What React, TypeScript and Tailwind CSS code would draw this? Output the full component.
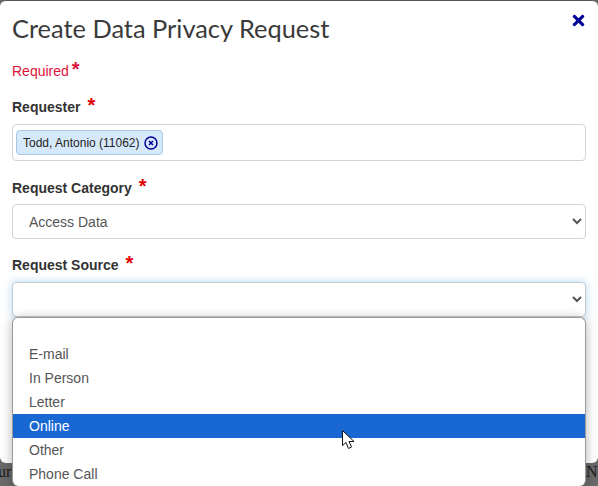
import { FaTimes } from "react-icons/fa";

const sourceOptions = ["", "E-mail", "In Person", "Letter", "Online", "Other", "Phone Call"];

function Star() {
  return <span className="ml-[7px] text-[20px] font-bold leading-none text-[#e00000] relative top-[-2px]">*</span>;
}

function FieldLabel({ children }: { children: string }) {
  return (
    <div className="flex items-center h-[20px] text-[14px] font-bold text-[#333]">
      {children}
      <Star />
    </div>
  );
}

export default function App() {
  return (
    <div className="relative h-[486px] w-[598px] overflow-hidden bg-[#6a6a6a] font-['Liberation_Sans',sans-serif]">
      <div className="h-[463px] rounded-[6px] border-t border-t-[#555] bg-white px-[12px]">
        <div className="flex items-start justify-between h-[55px]">
          <h1 className="pt-[12px] font-['Lato',sans-serif] text-[25.4px] leading-[30px] text-[#3a3a3a]">
            Create Data Privacy Request
          </h1>
          <button className="mt-[11px] -mr-[1px] text-[#000099]">
            <FaTimes size={17} />
          </button>
        </div>

        <div className="mt-[5px] flex h-[20px] items-center text-[14px] text-[#dc143c]">
          Required
          <span className="ml-[3px] text-[20px] font-bold leading-none relative top-[-2px]">*</span>
        </div>

        <div className="mt-[16px]">
          <FieldLabel>Requester</FieldLabel>
          <div className="mt-[7px] flex h-[37px] w-[574px] items-center rounded-[4px] border border-[#ced4da] px-[3px]">
            <span className="flex h-[25px] items-center gap-[4px] rounded-[4px] border border-[#a9c6e3] bg-[#d6e9fb] pl-[6px] pr-[4px] text-[12px] text-[#222]">
              Todd, Antonio (11062)
              <svg width="14" height="14" viewBox="0 0 14 14" fill="none" stroke="#000099">
                <circle cx="7" cy="7" r="6" strokeWidth="1.5" />
                <path d="M5 5l4 4M9 5l-4 4" strokeWidth="1.6" />
              </svg>
            </span>
          </div>
        </div>

        <div className="mt-[17px]">
          <FieldLabel>Request Category</FieldLabel>
          <select
            defaultValue="Access Data"
            className="mt-[6px] block h-[35px] w-[574px] rounded-[4px] border border-[#ced4da] bg-white pl-[12px] text-[14px] text-[#555]"
          >
            <option>Access Data</option>
          </select>
        </div>

        <div className="mt-[16px]">
          <FieldLabel>Request Source</FieldLabel>
          <select className="mt-[7px] block h-[35px] w-[574px] rounded-[4px] border border-[#c4ccd4] bg-white pl-[12px] text-[14px] text-[#555] shadow-[0_0_8px_rgba(102,175,233,0.5)]">
            <option></option>
          </select>
        </div>
      </div>

      <div className="flex h-[18px] items-center justify-between font-['Liberation_Serif',serif] text-[16px] font-normal text-[#1c1c1c]">
        <span className="-ml-[2px]">ur</span>
        <span className="w-[12px] whitespace-nowrap">No</span>
      </div>

      {/* open select list */}
      <div className="absolute left-[12px] top-[317px] h-[169px] w-[574px] overflow-hidden rounded-[6px] border-l border-r border-t border-[#9a9a9a] bg-white text-[14px] text-[#555] shadow-[0_2px_12px_rgba(0,0,0,0.3)]">
        {sourceOptions.map((option) => (
          <div
            key={option}
            className={`flex h-[24px] items-center pl-[16px] ${option === "Online" ? "bg-[#1967d2] text-white" : ""}`}
          >
            {option}
          </div>
        ))}
      </div>

      {/* mouse pointer */}
      <svg className="absolute left-[342px] top-[430px]" width="14" height="20" viewBox="0 0 14 20">
        <path d="M0.5 0.5V15.5L4 12.5L6.5 18.5L9.5 17L7 11.5H12Z" fill="white" stroke="#111" strokeWidth="1" />
      </svg>
    </div>
  );
}
